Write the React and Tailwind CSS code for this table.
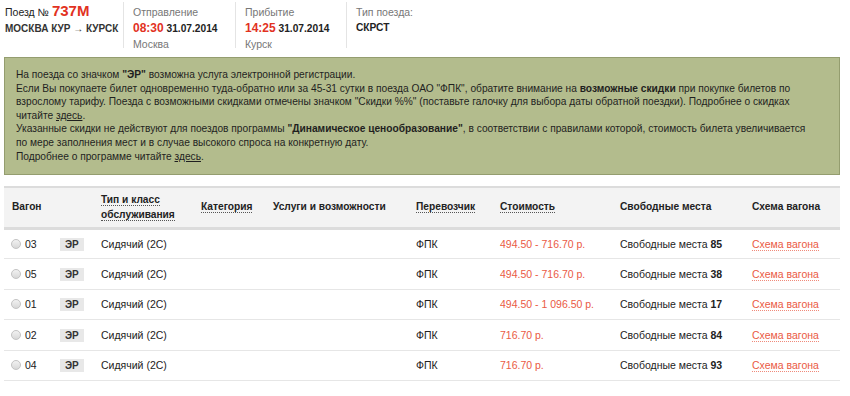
import React from 'react';

const rows = [
  { num: '03', price: '494.50 - 716.70 р.', free: '85' },
  { num: '05', price: '494.50 - 716.70 р.', free: '38' },
  { num: '01', price: '494.50 - 1 096.50 р.', free: '17' },
  { num: '02', price: '716.70 р.', free: '84' },
  { num: '04', price: '716.70 р.', free: '93' },
];

function Dotted({ children }) {
  return <span className="border-b border-dotted border-[#555]">{children}</span>;
}

export default function App() {
  return (
    <div className="w-[850px] h-[396px] bg-white text-[#222] text-[10.5px] leading-[14px] overflow-hidden" style={{ fontFamily: '"Liberation Sans", Arial, sans-serif' }}>
      {/* train header */}
      <div className="flex h-[48px] pt-[2px]">
        <div className="w-[124px] pl-[5px] pt-[2px] border-r border-[#e4e4e4] whitespace-nowrap">
          <div className="flex items-baseline gap-[3px]">
            <span>Поезд №</span>
            <span className="text-[15px] font-bold text-[#e2321f]">737M</span>
          </div>
          <div className="font-bold text-[#333] mt-[3px] text-[10px]">МОСКВА КУР → КУРСК</div>
        </div>
        <div className="w-[112px] pl-[9px] pt-[3px] border-r border-[#e4e4e4] whitespace-nowrap">
          <div className="text-[#777]">Отправление</div>
          <div className="font-bold mt-[2px] text-[10.2px]"><span className="text-[12px] text-[#e2321f]">08:30</span> 31.07.2014</div>
          <div className="text-[#777] mt-[1px]">Москва</div>
        </div>
        <div className="w-[111px] pl-[9px] pt-[3px] border-r border-[#e4e4e4] whitespace-nowrap">
          <div className="text-[#777]">Прибытие</div>
          <div className="font-bold mt-[2px] text-[10.2px]"><span className="text-[12px] text-[#e2321f]">14:25</span> 31.07.2014</div>
          <div className="text-[#777] mt-[1px]">Курск</div>
        </div>
        <div className="pl-[9px] pt-[3px]">
          <div className="text-[#777]">Тип поезда:</div>
          <div className="font-bold mt-[2px] text-[10.2px]">СКРСТ</div>
        </div>
      </div>

      {/* notice */}
      <div className="mx-[4px] mt-[9px] w-[836px] h-[118px] bg-[#b3bc8d] border border-[#949d6f] pl-[11px] pt-[10px] text-[#1f1f1f] text-[10.2px] leading-[13.6px] whitespace-nowrap">
        <div>На поезда со значком <b>"ЭР"</b> возможна услуга электронной регистрации.</div>
        <div>Если Вы покупаете билет одновременно туда-обратно или за 45-31 сутки в поезда ОАО "ФПК", обратите внимание на <b>возможные скидки</b> при покупке билетов по</div>
        <div>взрослому тарифу. Поезда с возможными скидками отмечены значком "Скидки %%" (поставьте галочку для выбора даты обратной поездки). Подробнее о скидках</div>
        <div>читайте <u>здесь</u>.</div>
        <div>Указанные скидки не действуют для поездов программы <b>"Динамическое ценообразование"</b>, в соответствии с правилами которой, стоимость билета увеличивается</div>
        <div>по мере заполнения мест и в случае высокого спроса на конкретную дату.</div>
        <div>Подробнее о программе читайте <u>здесь</u>.</div>
      </div>

      {/* cars table */}
      <table className="ml-[4px] mt-[11px] w-[836px] border-collapse table-fixed">
        <colgroup>
          <col className="w-[50px]" />
          <col className="w-[41px]" />
          <col className="w-[100px]" />
          <col className="w-[72px]" />
          <col className="w-[143px]" />
          <col className="w-[84px]" />
          <col className="w-[120px]" />
          <col className="w-[132px]" />
          <col className="w-[94px]" />
        </colgroup>
        <thead>
          <tr className="bg-[#f3f3f3] border-t-2 border-b-[3px] border-[#dcdcdc] h-[41px] text-left text-[10.2px]">
            <th className="pl-[8px] font-bold">Вагон</th>
            <th></th>
            <th className="pl-[6px] font-bold leading-[15px]"><Dotted>Тип и класс</Dotted><br /><Dotted>обслуживания</Dotted></th>
            <th className="pl-[6px] font-bold"><Dotted>Категория</Dotted></th>
            <th className="pl-[6px] font-bold">Услуги и возможности</th>
            <th className="pl-[6px] font-bold"><Dotted>Перевозчик</Dotted></th>
            <th className="pl-[6px] font-bold"><Dotted>Стоимость</Dotted></th>
            <th className="pl-[6px] font-bold">Свободные места</th>
            <th className="pl-[6px] font-bold">Схема вагона</th>
          </tr>
        </thead>
        <tbody>
          {rows.map((r) => (
            <tr key={r.num} className="h-[30.5px] border-b border-[#e6e6e6]">
              <td className="pl-[7px]">
                <div className="flex items-center gap-[4px]">
                  <span className="w-[10px] h-[10px] rounded-full border border-[#c4c4c4] bg-gradient-to-b from-[#f2f2f2] to-[#d8d8d8]" />
                  <span>{r.num}</span>
                </div>
              </td>
              <td className="pl-[6px]">
                <span className="inline-block bg-[#e8e8e8] px-[5px] text-[10px] leading-[13px] font-bold text-[#333]">ЭР</span>
              </td>
              <td className="pl-[6px]">Сидячий (2С)</td>
              <td></td>
              <td></td>
              <td className="pl-[6px]">ФПК</td>
              <td className="pl-[6px] text-[#ea5a44]">{r.price}</td>
              <td className="pl-[6px]">Свободные места <b>{r.free}</b></td>
              <td className="pl-[6px]"><span className="text-[#ea5a44] border-b border-dotted border-[#f08a7a]">Схема вагона</span></td>
            </tr>
          ))}
        </tbody>
      </table>
    </div>
  );
}
